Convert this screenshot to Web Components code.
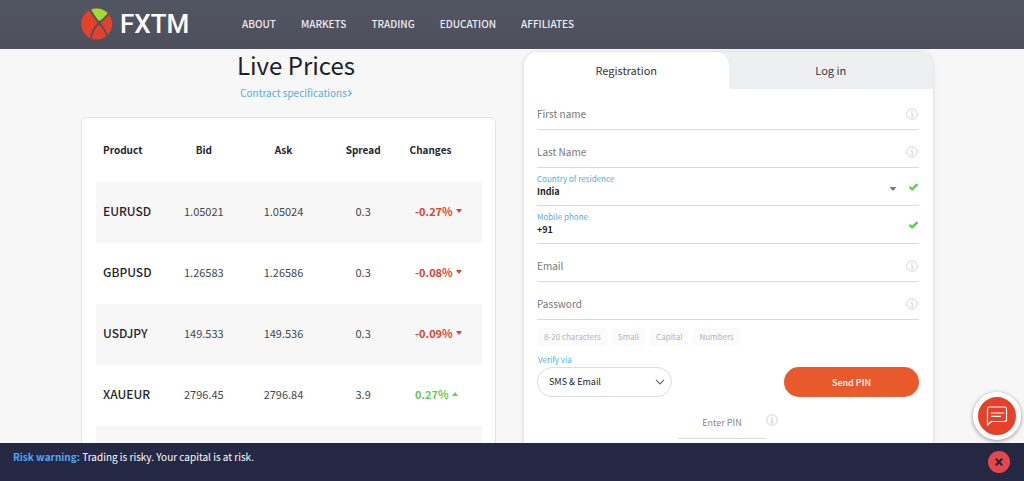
<!DOCTYPE html>
<html lang="en">
<head>
<meta charset="utf-8">
<meta name="viewport" content="width=device-width, initial-scale=1">
<title>FXTM</title>
<style>
  html, body { margin: 0; height: 100%; }
  body {
    font: 10px/16px "Noto Sans CJK SC", "Noto Sans", sans-serif;
    color: #2b2b33;
    background: #f7f7f8;
    --blue: #56ace0;
    --ink: #25252d;
    --line: #d9dadc;
    --orange: #e8592b;
    --red: #e4402a;
    --green: #62cb55;
  }
</style>
</head>
<body>
<fx-app>
  <fx-header slot="header"></fx-header>
  <fx-prices></fx-prices>
  <fx-registration></fx-registration>
  <fx-chat slot="chat"></fx-chat>
  <fx-warning slot="footer" heading="Risk warning:">Trading is risky. Your capital is at risk.</fx-warning>
</fx-app>

<script>
  const define = (name, html, setup) => {
    const template = document.createElement('template');
    template.innerHTML = html;
    customElements.define(name, class extends HTMLElement {
      connectedCallback() {
        if (this.shadowRoot) return;
        const root = this.attachShadow({ mode: 'open' });
        root.append(template.content.cloneNode(true));
        if (setup) setup(this, root);
      }
    });
  };

  define('fx-info', `
    <style>
      :host { display: block; width: 12px; height: 12px; }
      svg { display: block; }
    </style>
    <svg width="12" height="12" viewBox="0 0 12 12" fill="none" stroke="#cfcfd1" aria-hidden="true">
      <circle cx="6" cy="6" r="5.3" stroke-width=".9"/>
      <path d="M4.9 4.9h1.3v3.9M4.7 8.9h2.8" stroke-width="1"/>
      <circle cx="6" cy="3.2" r=".4" fill="#cfcfd1" stroke-width=".5"/>
    </svg>`);

  define('fx-header', `
    <style>
      :host {
        display: flex; align-items: center; height: 49px; padding: 0 81px 2px;
        background: linear-gradient(#525562, #4d505c); color: #fff; box-sizing: border-box;
      }
      .logo { display: flex; align-items: center; gap: 7px; width: 161px; color: #fff; text-decoration: none; }
      .logo svg { display: block; }
      .logo span { font: 500 26px/32px Roboto, sans-serif; }
      nav { display: flex; gap: 25px; }
      nav a { color: #eceef2; text-decoration: none; font-weight: 500; white-space: nowrap; }
    </style>
    <a class="logo" href="#" aria-label="FXTM">
      <svg width="32" height="32" viewBox="0 0 32 32">
        <clipPath id="disc"><circle cx="15.700" cy="16" r="15.500"/></clipPath>
        <g clip-path="url(#disc)">
          <path d="M0 0h32v32H0z" fill="#e4402a"/>
          <path d="M9 0h18l2 4-5 5-5.500 4.500-6-6z" fill="#a0dc30"/>
          <path d="M9 1.500C11.500 7 15.500 11.500 18.200 15c3 3.300 6.500 7 8.300 14M28.500 3.500C26.500 8.500 21.500 11.500 18.200 15c-4.500 4.500-7.700 8-8.200 17" fill="none" stroke="#50535f" stroke-width="1.900"/>
          <path d="M18.200 12.600 20.600 15l-2.400 2.600-2.400-2.600z" fill="#50535f"/>
        </g>
      </svg>
      <span>FXTM</span>
    </a>
    <nav>
      <a href="#">ABOUT</a><a href="#">MARKETS</a><a href="#">TRADING</a><a href="#">EDUCATION</a><a href="#">AFFILIATES</a>
    </nav>`);

  define('fx-app', `
    <style>
      :host { display: grid; grid-template-rows: auto minmax(0, 1fr) auto; height: 100vh; position: relative; }
      main {
        display: grid; grid-template-columns: minmax(0, 415fr) minmax(0, 409fr); gap: 28px;
        align-items: start; padding: 0 91px 0 81px; overflow: hidden;
      }
      .chat { position: absolute; right: 3px; bottom: 41px; }
    </style>
    <slot name="header"></slot>
    <main><slot></slot></main>
    <slot name="footer"></slot>
    <div class="chat"><slot name="chat"></slot></div>`);

  define('fx-prices', `
    <style>
      :host { display: block; }
      .top { display: flex; flex-direction: column; align-items: center; padding-left: 15px; }
      h1 { margin: 0; font-size: 24px; line-height: 32px; font-weight: 400; color: #202026; }
      .top a { display: flex; align-items: center; gap: 1px; margin-top: 4px; color: var(--blue); text-decoration: none; }
      .card {
        margin-top: 16px; padding: 3px 13px 24px 14px; background: #fff;
        border: 1px solid #e2e3e5; border-radius: 6px;
      }
      table { width: 100%; border-collapse: collapse; table-layout: fixed; }
      th, td { box-sizing: border-box; height: 61px; padding: 0 0 3px; text-align: center; font-size: 11px; line-height: 16px; }
      th { font-size: 10px; font-weight: 700; color: var(--ink); }
      td { color: #45454b; }
      th:first-child { text-align: left; padding-left: 7px; width: 68px; }
      tbody th { font-size: 12px; font-weight: 500; }
      thead th:last-child { padding-right: 24px; width: 79px; }
      tbody tr:nth-child(odd) { background: #f7f7f7; }
      td:last-child { font-weight: 700; text-align: left; padding-left: 12px; color: var(--red); }
      td.up { color: var(--green) !important; }
      td span { display: flex; align-items: center; gap: 3px; }
    </style>
    <div class="top">
      <h1>Live Prices</h1>
      <a href="#">Contract specifications
        <svg width="4" height="8" viewBox="0 0 4 8" fill="none" stroke="currentColor" stroke-width="1.200"><path d="M.5 1.500 3.200 4.200.5 7"/></svg></a>
    </div>
    <div class="card">
      <table>
        <thead><tr><th>Product</th><th>Bid</th><th>Ask</th><th>Spread</th><th>Changes</th></tr></thead>
        <tbody></tbody>
      </table>
    </div>`, (host, root) => {
      const rows = [
        ['EURUSD', '1.05021', '1.05024', '0.3', '-0.27%'],
        ['GBPUSD', '1.26583', '1.26586', '0.3', '-0.08%'],
        ['USDJPY', '149.533', '149.536', '0.3', '-0.09%'],
        ['XAUEUR', '2796.45', '2796.84', '3.9', '0.27%'],
        ['', '', '', '', '']
      ];
      root.querySelector('tbody').innerHTML = rows.map(([name, bid, ask, spread, change]) => {
        const up = change[0] !== '-';
        const arrow = change && `<svg width="6" height="4" viewBox="0 0 6 4" fill="currentColor"><path d="${up ? 'M0 4 3 0 6 4z' : 'M0 0h6L3 4z'}"/></svg>`;
        return `<tr><th scope="row">${name}</th><td>${bid}</td><td>${ask}</td><td>${spread}</td>` +
          `<td class="${up ? 'up' : ''}"><span>${change}${arrow}</span></td></tr>`;
      }).join('');
    });

  define('fx-field', `
    <style>
      :host { display: flex; align-items: center; height: 38px; box-sizing: border-box; border-bottom: 1px solid var(--line); }
      .body { flex: 1; min-width: 0; display: flex; flex-direction: column; padding-top: 6px; }
      :host([filled]) .body { padding: 0 0 2px; }
      label { font-size: 8px; line-height: 12px; color: var(--blue); }
      input, select {
        width: 100%; height: 16px; padding: 0; border: 0; outline: 0; background: none; appearance: none;
        font: 10px/16px "Noto Sans CJK SC", sans-serif; color: #1c1c22;
      }
      :host([filled]) input, :host([filled]) select { height: 14px; font-size: 9px; line-height: 14px; font-weight: 700; }
      input::placeholder { color: #77777b; opacity: 1; }
      .icons { display: flex; align-items: center; gap: 11px; padding-top: 7px; padding-right: 1px; }
      :host([filled]) .icons { padding-top: 0; padding-right: 0; }
    </style>
    <div class="body"></div>
    <div class="icons"></div>`, (host, root) => {
      const name = host.getAttribute('label');
      const value = host.getAttribute('value') || '';
      const filled = host.hasAttribute('filled');
      const control = host.hasAttribute('select')
        ? `<select id="c"><option>${value}</option></select>`
        : `<input id="c" type="${host.getAttribute('type') || 'text'}" value="${value}" ${filled ? '' : `placeholder="${name}" aria-label="${name}"`}>`;
      root.querySelector('.body').innerHTML = (filled ? `<label for="c">${name}</label>` : '') + control;
      root.querySelector('.icons').innerHTML =
        (host.hasAttribute('select') ? '<svg width="8" height="10" viewBox="0 0 8 10"><path d="M.5 5h7L4 9z" fill="#77777b"/></svg>' : '') +
        (filled ? '<svg width="11" height="10" viewBox="0 0 11 10"><path d="M1.500 4.800 4.100 7.300 9.500 2.200" fill="none" stroke="#62cb55" stroke-width="2.400"/></svg>' : '<fx-info></fx-info>');
    });

  define('fx-registration', `
    <style>
      :host { display: block; margin-top: 3px; background: #fff; border-radius: 14px 14px 0 0; box-shadow: 0 0 4px #00000026; }
      .tabs { display: grid; grid-template-columns: 1fr 1fr; border-radius: 14px 14px 0 0; overflow: hidden; background: #eeeff1; }
      button { font-family: inherit; cursor: pointer; }
      .tabs button { height: 37px; padding: 0 0 1px; border: 0; font-size: 11px; line-height: 16px; color: #34343e; background: none; }
      .tabs .active { background: #fff; border-radius: 0 14px 0 0; }
      form { padding: 3px 14px 40px 13px; }
      .chips { display: flex; gap: 5px; padding: 8px 1px; }
      .chips span { padding: 1px 6px; border-radius: 3px; background: #fbfbfb; color: #b4b4b8; font-size: 8px; line-height: 16px; }
      .send { display: flex; justify-content: space-between; align-items: end; }
      .verify { display: grid; gap: 1px; }
      .verify label { padding-left: 1px; font-size: 8px; line-height: 12px; color: var(--blue); }
      .select { display: grid; align-items: center; width: 135px; }
      .select > * { grid-area: 1 / 1; }
      .select svg { justify-self: end; margin-right: 7px; pointer-events: none; }
      select {
        height: 30px; padding: 0 11px; border: 1px solid #dcdde0; border-radius: 15px; background: #fff;
        appearance: none; font: 9px/16px "Noto Sans CJK SC", sans-serif; color: #202026;
      }
      .send button { width: 135px; height: 30px; border: 0; border-radius: 15px; background: var(--orange); color: #fff; font-size: 9px; font-weight: 500; }
      .pin { display: flex; justify-content: center; padding-top: 17px; }
      .pin input {
        width: 88px; height: 25px; box-sizing: border-box; padding: 0 0 8px; border: 0; border-bottom: 1px solid var(--line);
        outline: 0; text-align: center; font: 9px/16px "Noto Sans CJK SC", sans-serif; background: none;
      }
      .pin input::placeholder { color: #85858a; opacity: 1; }
    </style>
    <div class="tabs" role="tablist">
      <button class="active" role="tab" aria-selected="true">Registration</button>
      <button role="tab" aria-selected="false">Log in</button>
    </div>
    <form>
      <fx-field label="First name"></fx-field>
      <fx-field label="Last Name"></fx-field>
      <fx-field label="Country of residence" value="India" filled select></fx-field>
      <fx-field label="Mobile phone" value="+91" type="tel" filled></fx-field>
      <fx-field label="Email" type="email"></fx-field>
      <fx-field label="Password" type="password"></fx-field>
      <div class="chips"><span>8-20 characters</span><span>Small</span><span>Capital</span><span>Numbers</span></div>
      <div class="send">
        <div class="verify">
          <label for="via">Verify via</label>
          <div class="select">
            <select id="via"><option>SMS &amp; Email</option></select>
            <svg width="10" height="6" viewBox="0 0 10 6" fill="none" stroke="#66666b" stroke-width="1.200"><path d="M1 .8l4 4 4-4"/></svg>
          </div>
        </div>
        <button type="button">Send PIN</button>
      </div>
      <div class="pin"><input placeholder="Enter PIN" aria-label="Enter PIN"><fx-info></fx-info></div>
    </form>`);

  define('fx-chat', `
    <style>
      :host { display: block; }
      button {
        display: grid; place-items: center; width: 48px; height: 48px; padding: 0; cursor: pointer;
        border: 5px solid #fff; border-radius: 50%; background: var(--red); box-shadow: 0 1px 4px #0006;
      }
    </style>
    <button aria-label="Chat">
      <svg width="22" height="22" viewBox="0 0 22 22" fill="none" stroke="#fff" stroke-width="1.200" stroke-linejoin="round">
        <path d="M1.500 20V4Q1.500 2 3.500 2h15Q20.500 2 20.500 4v10.500q0 2-2 2H5.500z"/><path d="M5 8h13M5 11.300h10"/>
      </svg>
    </button>`);

  define('fx-warning', `
    <style>
      :host { display: flex; justify-content: space-between; height: 38px; padding: 0 14px 0 13px; background: #252843; color: #fff; }
      p { margin: 0; padding-top: 6px; }
      b { color: #4fa6f3; font-weight: 700; }
      button { align-self: center; display: grid; place-items: center; width: 22px; height: 22px; padding: 0; border: 0; border-radius: 50%; background: #e8474a; cursor: pointer; }
    </style>
    <p><b></b> <slot></slot></p>
    <button aria-label="Close"><svg width="8" height="8" viewBox="0 0 8 8" stroke="#252843" stroke-width="2.200"><path d="M.8.8l6.400 6.400M7.200.8L.8 7.200"/></svg></button>`,
    (host, root) => { root.querySelector('b').textContent = host.getAttribute('heading'); });
</script>
</body>
</html>
